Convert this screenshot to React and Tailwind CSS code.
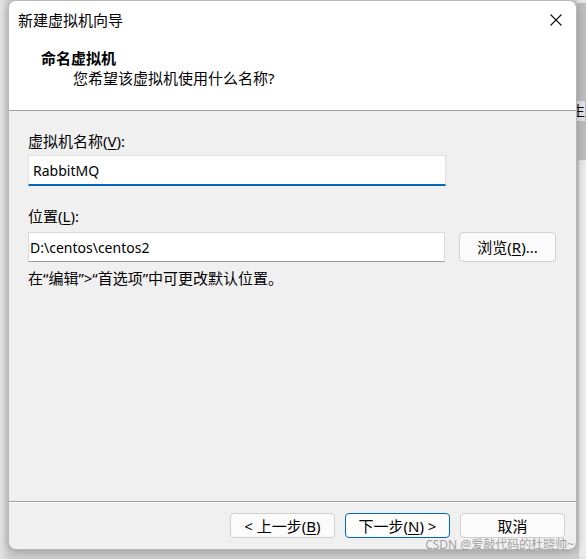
import React from "react";

const FONT = { fontFamily: '"Noto Sans", "Noto Sans CJK SC", sans-serif' };

function Mnemonic({ children }) {
  return <span className="underline underline-offset-2">{children}</span>;
}

function DialogButton({ children, primary }) {
  return (
    <button
      className={
        primary
          ? "h-[25px] w-[105px] rounded-[4px] border border-[#0067c0] bg-[#fdfdfd] text-[15px] leading-[20px] text-black"
          : "h-[25px] w-[105px] rounded-[4px] border border-[#d0d0d0] bg-[#fbfbfb] text-[15px] leading-[20px] text-black"
      }
    >
      {children}
    </button>
  );
}

export default function App() {
  return (
    <div className="relative flex h-[559px] w-[586px] overflow-hidden bg-[#cfcfcf]" style={FONT}>
      <div className="w-[8px] bg-gradient-to-r from-[#e4e4e4] to-[#d2d2d2]" />

      <div className="relative z-10 flex h-[550px] w-[569px] flex-col overflow-hidden rounded-[8px] border border-[#b8b8b8] bg-[#f0f0f0] shadow-[0_2px_8px_rgba(0,0,0,0.25)]">
        <div className="bg-white">
          <div className="flex h-[38px] items-center justify-between pl-[9px] pr-[13px]">
            <span className="text-[15px] text-black">新建虚拟机向导</span>
            <svg width="14" height="14" viewBox="0 0 14 14">
              <path d="M1.5 1.5 L12.5 12.5 M12.5 1.5 L1.5 12.5" stroke="#111" strokeWidth="1.1" />
            </svg>
          </div>
          <div className="h-[72px] border-b border-[#a0a0a0] pl-[32px] pt-[9px]">
            <div className="text-[15px] font-bold leading-[20px] text-black">命名虚拟机</div>
            <div className="pl-[32px] text-[15px] leading-[20px] text-black">您希望该虚拟机使用什么名称?</div>
          </div>
        </div>

        <div className="flex flex-1 flex-col px-[19px] pt-[20px]">
          <div className="text-[15px] leading-[20px] text-black">
            虚拟机名称(<Mnemonic>V</Mnemonic>):
          </div>
          <div className="mt-[4px] flex h-[31px] w-[418px] items-center border border-b-2 border-[#e0e0e0] border-b-[#0067c0] bg-white pl-[4px] text-[14px] text-black">
            RabbitMQ
          </div>

          <div className="mt-[20px] text-[15px] leading-[20px] text-black">
            位置(<Mnemonic>L</Mnemonic>):
          </div>
          <div className="mt-[6px] flex items-center gap-[14px]">
            <div className="flex h-[30px] w-[417px] items-center border border-[#dadada] border-b-[#9a9a9a] bg-white pl-[1px] text-[14px] text-black">
              D:\centos\centos2
            </div>
            <button className="h-[30px] w-[97px] rounded-[4px] border border-[#d0d0d0] bg-[#fbfbfb] text-[15px] text-black">
              浏览(<Mnemonic>R</Mnemonic>)...
            </button>
          </div>
          <div className="mt-[6px] text-[15px] leading-[20px] text-black">
            在“编辑”&gt;“首选项”中可更改默认位置。
          </div>
        </div>

        <div className="h-[48px] border-t border-[#a0a0a0] shadow-[inset_0_1px_0_#ffffff]">
          <div className="flex justify-end gap-[10px] pr-[11px] pt-[11px]">
            <DialogButton>
              &lt; 上一步(<Mnemonic>B</Mnemonic>)
            </DialogButton>
            <DialogButton primary>
              下一步(<Mnemonic>N</Mnemonic>) &gt;
            </DialogButton>
            <DialogButton>取消</DialogButton>
          </div>
        </div>
      </div>

      <div className="flex w-[9px] flex-col overflow-hidden">
        <div className="h-[3px] bg-[#e6e6e6]" />
        <div className="relative h-[157px] bg-[#bdbdbd]">
          <span className="absolute left-[-6px] top-[98px] bg-[#e2e2e2] text-[14px] leading-[20px] text-black">生</span>
        </div>
        <div className="flex-1 bg-[#ebebeb] shadow-[inset_2px_0_2px_rgba(0,0,0,0.15)]" />
      </div>

      <div className="absolute bottom-[7px] right-[12px] z-20 text-[12px] leading-[14px] text-[#9a9a9a] opacity-90">
        CSDN @爱敲代码的杜晓帅~
      </div>
    </div>
  );
}
